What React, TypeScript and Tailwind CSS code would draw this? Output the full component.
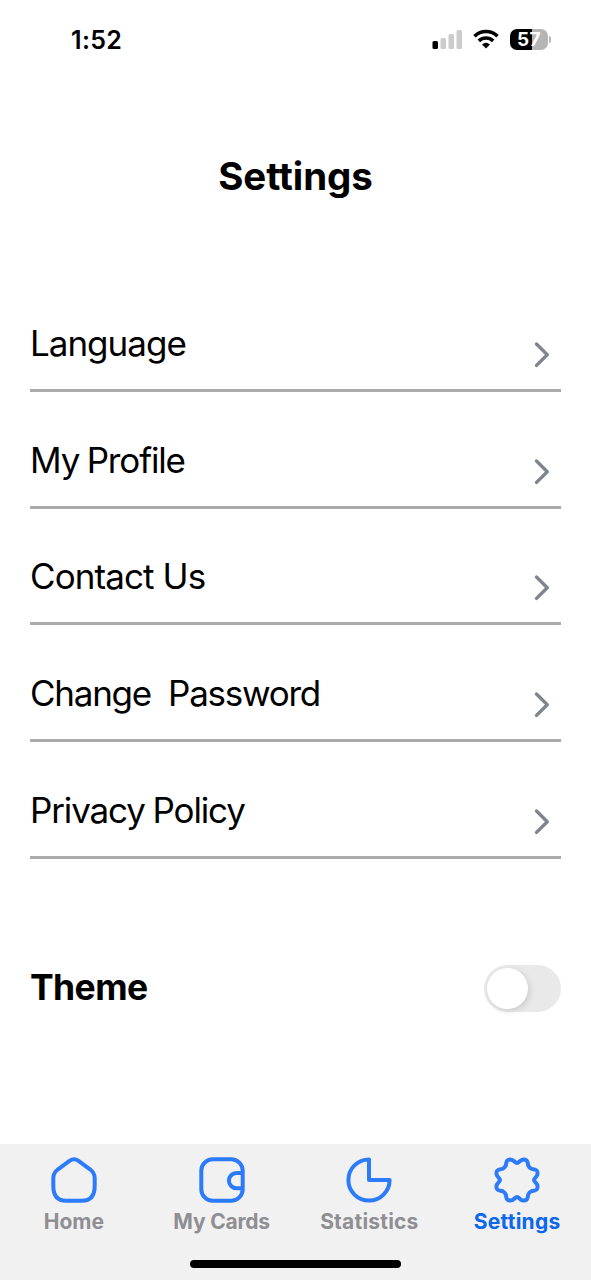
import type { ReactNode } from "react";

const rows = [
  { label: "Language", cls: "tracking-[-1px]" },
  { label: "My Profile", cls: "tracking-[-1.15px] [word-spacing:-1.2px]" },
  { label: "Contact Us", cls: "tracking-[-0.9px]" },
  { label: "Change  Password", cls: "tracking-[-1.26px]" },
  { label: "Privacy Policy", cls: "tracking-[-1.13px] [word-spacing:-1px]" },
];

const gearQuarter = "C2.200 -17.000 3.000 -20.600 6.600 -20.600C11.800 -20.600 10.300 -16.500 11.300 -14.300C12.100 -12.600 12.600 -12.100 14.300 -11.300C16.500 -10.300 20.600 -11.800 20.600 -6.600C20.600 -3.000 17.000 -2.200 17.000 0";

const gearPath =
  "M0 -17" +
  [0, 90, 180, 270]
    .map((deg) => {
      const c = Math.round(Math.cos((deg * Math.PI) / 180));
      const s = Math.round(Math.sin((deg * Math.PI) / 180));
      return gearQuarter.replace(/(-?[\d.]+) (-?[\d.]+)/g, (_, x, y) => `${x * c - y * s} ${x * s + y * c}`);
    })
    .join("") +
  "Z";

function TabIcon({ children }: { children: ReactNode }) {
  return (
    <svg className="h-[46px] w-[46px]" viewBox="0 0 46 46" fill="none" stroke="#2b7bfb" strokeWidth="4" strokeLinejoin="round">
      {children}
    </svg>
  );
}

const tabs = [
  {
    label: "Home",
    cls: "text-[#8e8e93] tracking-[0.05px]",
    icon: <path d="M18.500 3.800Q23 0.800 27.500 3.800L39 12.300Q43.700 16 43.700 21V29Q43.700 43.700 31 43.700H15Q2.300 43.700 2.300 29V21Q2.300 16 7 12.300Z" />,
  },
  {
    label: "My Cards",
    cls: "text-[#8e8e93] tracking-[-0.2px]",
    icon: (
      <>
        <rect x="2.300" y="2.300" width="41.400" height="41.400" rx="11.500" />
        <path d="M43.700 16H37.500A7.600 7.600 0 0 0 37.500 31.200H43.700" />
      </>
    ),
  },
  {
    label: "Statistics",
    cls: "text-[#8e8e93] tracking-[0.2px]",
    icon: <path d="M23 2.400A20.600 20.600 0 1 0 43.600 23H23Z" />,
  },
  { label: "Settings", cls: "text-[#0b66f0] tracking-[0.25px]", icon: <path transform="translate(23 23)" d={gearPath} /> },
];

function StatusBar() {
  return (
    <header className="flex h-[78px] items-center justify-between pr-[40px] pl-[71px]">
      <span className="pt-[3px] text-[25px] font-semibold tracking-[0.35px]">1:52</span>
      <div className="flex items-center">
        <svg className="h-5 w-[31px]" viewBox="0 0 31 20">
          <rect x="0.500" y="12" width="5.500" height="8" rx="1.500" fill="#000" />
          <rect x="8.500" y="9" width="5.500" height="11" rx="1.500" fill="#cbcbcb" />
          <rect x="16.500" y="5" width="5.500" height="15" rx="1.500" fill="#cbcbcb" />
          <rect x="24.500" y="1" width="5.500" height="19" rx="1.500" fill="#cbcbcb" />
        </svg>
        <svg className="ml-2.5 h-5 w-[26px]" viewBox="0 0 26 20" fill="none" stroke="#000" strokeWidth="3.600">
          <path d="M1.500 7.200A16.500 16.500 0 0 1 24.500 7.200" />
          <path d="M5.800 11.900A10.300 10.300 0 0 1 20.200 11.900" />
          <path d="M13 19.600L9 15.500Q13 12 17 15.500Z" fill="#000" stroke="none" />
        </svg>
        <div className="ml-[11px] flex h-[21px] w-[38px] items-center justify-center rounded-[7px] bg-[linear-gradient(90deg,#000_57%,#b5b5b5_57%)] text-[19px] leading-none font-bold tracking-[0.3px] text-white">
          57
        </div>
        <span className="ml-px h-[7px] w-[2px] rounded-r-full bg-[#b9b9b9]" />
      </div>
    </header>
  );
}

export default function App() {
  return (
    <div className="flex h-[1280px] w-[591px] flex-col bg-white font-['Inter',sans-serif] text-black">
      <StatusBar />
      <h1 className="mt-[74px] text-center text-[38.500px] leading-[48px] font-bold tracking-[-0.1px]">Settings</h1>
      <ul className="mt-[75px] px-[30px]">
        {rows.map(({ label, cls }) => (
          <li key={label} className="flex h-[116.800px] items-end justify-between border-b-3 border-[#ababab] pb-[20px]">
            <span className={`mb-[4px] text-[35px] leading-[44px] whitespace-pre ${cls}`}>{label}</span>
            <svg className="mr-[10.500px] h-[28px] w-[18px]" viewBox="0 0 18 28" fill="none" stroke="#7f858c" strokeWidth="3.400" strokeLinecap="round" strokeLinejoin="round">
              <path d="M3.500 3L14.300 13.700L3.500 24.400" />
            </svg>
          </li>
        ))}
      </ul>
      <section className="mt-[106px] flex h-[47px] items-center justify-between px-[30px]">
        <h2 className="text-[35.500px] leading-[44px] font-bold tracking-[-0.6px]">Theme</h2>
        <button role="switch" aria-checked="false" aria-label="Theme" className="flex h-[47px] w-[77.500px] items-center rounded-full bg-[#e9e9e9] p-[3px]">
          <span className="h-[41px] w-[41px] rounded-full bg-white shadow-[2px_2px_6px_rgba(0,0,0,0.12)]" />
        </button>
      </section>
      <footer className="mt-auto flex h-[136px] flex-col items-center bg-[#f1f1f1] pt-[13px]">
        <nav className="grid w-full grid-cols-4">
          {tabs.map(({ label, cls, icon }) => (
            <div key={label} className={`flex flex-col items-center ${cls}`}>
              <TabIcon>{icon}</TabIcon>
              <span className="mt-[6px] text-[21px] leading-[26px] font-bold whitespace-nowrap">{label}</span>
            </div>
          ))}
        </nav>
        <div className="mt-auto mb-3 h-2 w-[211px] rounded-full bg-black" />
      </footer>
    </div>
  );
}
